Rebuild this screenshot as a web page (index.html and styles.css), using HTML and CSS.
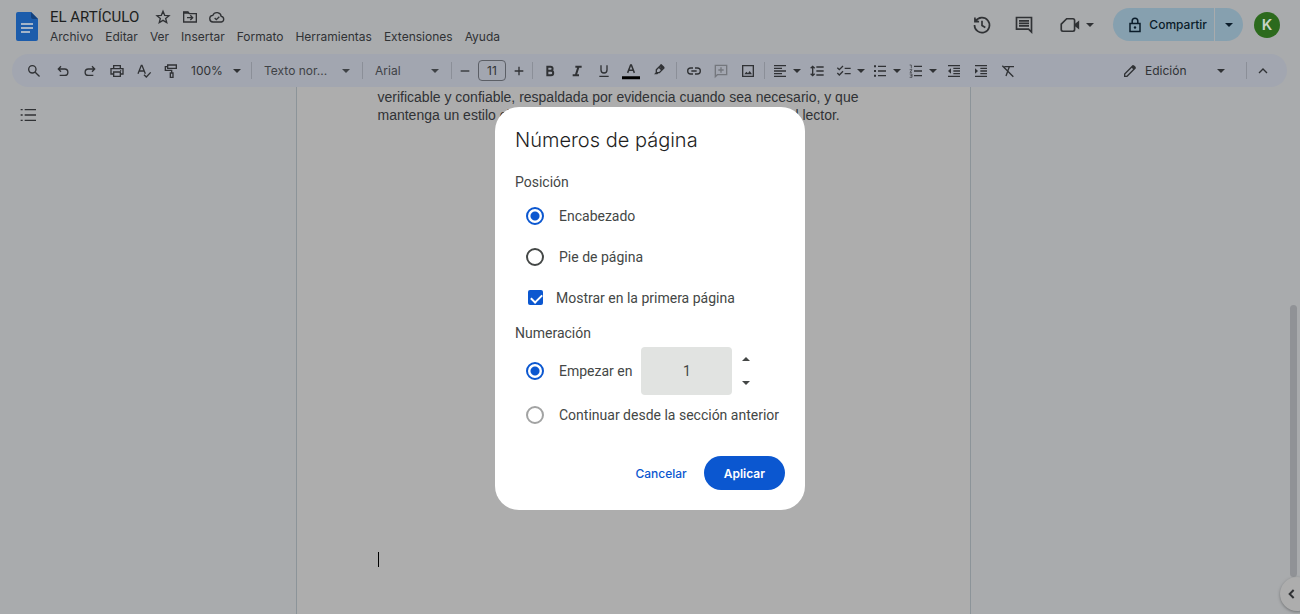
FILE: index.html
```html
<!DOCTYPE html>
<html lang="es">
<head>
<meta charset="utf-8">
<title>EL ARTÍCULO</title>
<link rel="stylesheet" href="styles.css">
</head>
<body>
<div class="app">
  <header class="header">
    <svg class="logo" viewBox="0 0 22 29"><path d="M2 0h13l7 7v20a2 2 0 0 1-2 2H2a2 2 0 0 1-2-2V2a2 2 0 0 1 2-2z" fill="#1c5cab"/><path d="M15 0l7 7h-5a2 2 0 0 1-2-2z" fill="#12407c"/><path d="M5 12h12M5 16h12M5 20h9" stroke="#a4b4c8" stroke-width="2"/></svg>
    <div class="heading">
      <div class="title-row">
        <h1 class="doc-title">EL ARTÍCULO</h1>
        <button class="mini" aria-label="Destacar"><svg viewBox="0 0 24 24"><path d="M12 3.500l2.500 6 6.500.5-5 4.200 1.600 6.300L12 17.100l-5.600 3.400L8 14.200 3 10l6.500-.5z" class="line"/></svg></button>
        <button class="mini" aria-label="Mover"><svg viewBox="0 0 24 24"><path d="M2.500 19.500v-15h6.500l2 2.500h10.500v12.500zM7.500 13h8M12.500 9.500l3.500 3.500-3.500 3.500" class="line"/><path d="M2 4h7l2 3H2z"/></svg></button>
        <button class="mini" aria-label="Estado"><svg viewBox="0 0 24 24"><path d="M6.500 19.500a5 5 0 0 1-.7-10A6.500 6.500 0 0 1 18.300 11a4.300 4.300 0 0 1 .2 8.500zM8.500 13.500l2.500 2.500 4.500-4.500" class="line"/></svg></button>
      </div>
      <nav class="menu">
        <button>Archivo</button><button>Editar</button><button>Ver</button><button>Insertar</button><button>Formato</button><button>Herramientas</button><button>Extensiones</button><button>Ayuda</button>
      </nav>
    </div>
    <div class="header-actions">
      <button class="big" aria-label="Historial"><svg viewBox="0 0 24 24"><path d="M4.300 7.500a9 9 0 1 1-1.300 4.500M3.500 3v5h5M12 7v5.500l4 2.500" class="line"/></svg></button>
      <button class="big" aria-label="Comentarios"><svg viewBox="0 0 24 24"><path d="M3 3h18v17.500L17.500 17H3zM6 7h12M6 10h12M6 13h12" class="line"/></svg></button>
      <button class="meet" aria-label="Reunión"><svg viewBox="0 0 24 24"><path d="M8 4.500h7.500a2 2 0 0 1 2 2v11a2 2 0 0 1-2 2H3.500a2 2 0 0 1-2-2V11z" class="line"/><path d="M18 10.500l5-4v11l-5-4z"/></svg><i class="caret"></i></button>
      <div class="share">
        <button class="share-main"><svg viewBox="0 0 16 16"><path d="M3 6.500h10v8H3zM5.200 6.500V4a2.800 2.800 0 0 1 5.600 0v2.500" fill="none" stroke="currentColor" stroke-width="1.500"/><circle cx="8" cy="10.500" r="1.200"/></svg>Compartir</button>
        <button class="share-more" aria-label="Opciones"><i class="caret"></i></button>
      </div>
      <button class="avatar">K</button>
    </div>
  </header>

  <div class="toolbar" role="toolbar">
    <button class="tool search" aria-label="Buscar"><svg viewBox="0 0 24 24"><circle cx="9.500" cy="9.500" r="5.500" class="line"/><path d="M13.800 13.800l6.500 6.500" class="line"/></svg></button>
    <button class="tool" aria-label="Deshacer"><svg viewBox="0 0 24 24"><path d="M9 5L5 9l4 4M5 9h9.500a4.800 4.800 0 0 1 0 9.600H7" class="line"/></svg></button>
    <button class="tool" aria-label="Rehacer"><svg viewBox="0 0 24 24"><path d="M15 5l4 4-4 4M19 9H9.500a4.800 4.800 0 0 0 0 9.600H17" class="line"/></svg></button>
    <button class="tool" aria-label="Imprimir"><svg viewBox="0 0 24 24"><path d="M7 8V4h10v4M7 16.500H3V8.500h18v8h-4M7 13.500h10V20H7z" class="line"/><circle cx="17.500" cy="11.500" r="1"/></svg></button>
    <button class="tool" aria-label="Ortografía"><svg viewBox="0 0 24 24"><path d="M3 16L8 3.500h1L14 16M5 12h7M12 17.500l3.500 3.500 6.500-7" class="line"/></svg></button>
    <button class="tool" aria-label="Copiar formato"><svg viewBox="0 0 24 24"><path d="M7 3h13v5H7zM7 5.500H3.500V11H13v4M11 15h4v6.500h-4z" class="line"/></svg></button>
    <label class="pick zoom"><select aria-label="Zoom"><option>100%</option></select><i class="caret"></i></label>
    <span class="rule"></span>
    <label class="pick style"><select aria-label="Estilos"><option>Texto nor...</option></select><i class="caret"></i></label>
    <span class="rule"></span>
    <label class="pick font"><select aria-label="Fuente"><option>Arial</option></select><i class="caret"></i></label>
    <span class="rule"></span>
    <button class="tool step" aria-label="Reducir"><svg viewBox="0 0 24 24"><path d="M5.500 12h13" class="line"/></svg></button>
    <input class="size" type="text" value="11" aria-label="Tamaño">
    <button class="tool step" aria-label="Aumentar"><svg viewBox="0 0 24 24"><path d="M5.500 12h13M12 5.500v13" class="line"/></svg></button>
    <span class="rule"></span>
    <div class="group">
      <button class="tool" aria-label="Negrita"><svg viewBox="0 0 24 24"><path d="M8 5.500h4.800a3 3 0 0 1 0 6.200H8zM8 11.700h5.500a3.300 3.300 0 0 1 0 6.600H8z" class="line heavy"/></svg></button>
      <button class="tool" aria-label="Cursiva"><svg viewBox="0 0 24 24"><path d="M9.500 5.500H19M5.500 18.500H15M14.300 5.500l-4.200 13" class="line heavy"/></svg></button>
      <button class="tool" aria-label="Subrayado"><svg viewBox="0 0 24 24"><path d="M7.500 3.500v7a4.500 4.500 0 0 0 9 0v-7M5 20h14" class="line"/></svg></button>
      <button class="tool ink" aria-label="Color de texto"><svg viewBox="0 0 24 24"><path d="M7.500 14.500L11.500 4h1l4 10.500M9 11h6" class="line"/><path d="M0 19h24v4H0z" fill="#000"/></svg></button>
      <button class="tool marker" aria-label="Resaltar"><svg viewBox="0 0 24 24"><path d="M8 10l6.500-6.500 4.500 4.500-6.500 6.500H8zM12 6.500l4.500 4.500" class="line"/><path d="M13.500 3l2-1.500 5 5-1.500 2L14 9zM8 13.500l3 2L9.500 17H4.500z"/></svg></button>
    </div>
    <span class="rule"></span>
    <div class="group">
      <button class="tool" aria-label="Enlace"><svg viewBox="0 0 24 24"><path d="M10.500 7.500H7a4.500 4.500 0 0 0 0 9h3.500M13.500 7.500H17a4.500 4.500 0 0 1 0 9h-3.500M8 12h8" class="line"/></svg></button>
      <button class="tool off" aria-label="Comentario"><svg viewBox="0 0 24 24"><path d="M3.500 20.500V3.500h17v14h-14zM12 6.500v8M8 10.500h8" class="line"/></svg></button>
      <button class="tool" aria-label="Imagen"><svg viewBox="0 0 24 24"><path d="M4 4h16v16H4z" class="line"/><path d="M6.500 17l3-4 2.500 2.500 2.500-3.500 3.500 5z"/></svg></button>
    </div>
    <span class="rule"></span>
    <div class="group">
      <button class="split" aria-label="Alinear"><svg viewBox="0 0 24 24"><path d="M3 4h18M3 8h12M3 12h18M3 16h12M3 20h18" class="line"/></svg><i class="caret"></i></button>
      <button class="tool spacing" aria-label="Interlineado"><svg viewBox="0 0 24 24"><path d="M11 6h11M11 12h11M11 18h11M5.500 5v14M2.500 8l3-3 3 3M2.500 16l3 3 3-3" class="line"/></svg></button>
      <button class="split checks" aria-label="Lista de control"><svg viewBox="0 0 24 24"><path d="M2 7l3 3 5.500-5.500M2 15l3 3 5.500-5.500M13 8h9M13 16h9" class="line"/></svg><i class="caret"></i></button>
      <button class="split" aria-label="Viñetas"><svg viewBox="0 0 24 24"><path d="M9 5h12M9 12h12M9 19h12" class="line"/><path d="M3 5h3M3 12h3M3 19h3" class="line heavy"/></svg><i class="caret"></i></button>
      <button class="split" aria-label="Numeración"><svg viewBox="0 0 24 24"><path d="M9 5h12M9 12h12M9 19h12" class="line"/><path d="M2.500 3H5v5M2.500 10H6l-3 4h3M2.500 16.500H6v5H2.500M3.500 19H6" class="line thin"/></svg><i class="caret"></i></button>
      <button class="tool" aria-label="Reducir sangría"><svg viewBox="0 0 24 24"><path d="M3 4h18M11 8h10M11 12h10M11 16h10M3 20h18" class="line"/><path d="M7.500 8v8l-4.500-4z"/></svg></button>
      <button class="tool" aria-label="Aumentar sangría"><svg viewBox="0 0 24 24"><path d="M3 4h18M11 8h10M11 12h10M11 16h10M3 20h18" class="line"/><path d="M3 8v8l4.500-4z"/></svg></button>
      <button class="tool" aria-label="Borrar formato"><svg viewBox="0 0 24 24"><path d="M6.500 5.500H21M14 5.500l-5 14M3.500 4l16.500 16.500" class="line"/></svg></button>
    </div>
    <div class="mode">
      <svg viewBox="0 0 24 24"><path d="M4 20v-3.500L16 4.500 19.500 8 7.500 20z" class="line"/><path d="M14 6.500L17.500 3 21 6.500 17.500 10z"/></svg>
      <label class="pick editing"><select aria-label="Modo"><option>Edición</option></select><i class="caret"></i></label>
      <span class="rule"></span>
      <button class="tool hide" aria-label="Ocultar menús"><svg viewBox="0 0 24 24"><path d="M6 15l6-6 6 6" class="line"/></svg></button>
    </div>
  </div>

  <main class="workspace">
    <aside class="outline"><button class="outline-btn" aria-label="Esquema"><svg viewBox="0 0 24 24"><path d="M7 4h17M7 12h17M7 20h17M1 4h3M1 12h3M1 20h3" class="line"/></svg></button></aside>
    <article class="sheet">
      <p>verificable y confiable, respaldada por evidencia cuando sea necesario, y que<br>mantenga un estilo claro, conciso y comprensible para el interés del lector.</p>
      <div class="cursor"></div>
    </article>
  </main>
  <div class="scroll-thumb"></div>
  <button class="side-toggle" aria-label="Mostrar panel"><svg viewBox="0 0 24 24"><path d="M14.500 6l-6 6 6 6" class="line heavy"/></svg></button>
</div>

<div class="backdrop">
  <form class="dialog" role="dialog" aria-labelledby="dlg-title">
    <h2 id="dlg-title">Números de página</h2>
    <h3>Posición</h3>
    <label class="option"><input type="radio" name="pos" checked>Encabezado</label>
    <label class="option"><input type="radio" name="pos">Pie de página</label>
    <label class="option check"><input type="checkbox" checked>Mostrar en la primera página</label>
    <h3 class="second">Numeración</h3>
    <div class="start">
      <label class="option"><input type="radio" name="num" checked>Empezar en</label>
      <input class="number" type="text" inputmode="numeric" value="1" aria-label="Empezar en">
      <div class="spin"><button type="button" aria-label="Subir"><i class="caret up"></i></button><button type="button" aria-label="Bajar"><i class="caret"></i></button></div>
    </div>
    <label class="option muted"><input type="radio" name="num">Continuar desde la sección anterior</label>
    <div class="actions"><button type="button" class="cancel">Cancelar</button><button type="button" class="apply">Aplicar</button></div>
  </form>
</div>
</body>
</html>
```
FILE: styles.css
```css
* { box-sizing: border-box; }
body {
  margin: 0;
  font-family: Inter, Roboto, sans-serif;
  font-size: 12px;
  color: #303235;
  background: #a9abad;
}
button, select, input { font: inherit; color: inherit; }
button { border: 0; padding: 0; background: none; cursor: pointer; }
h1, h2, h3, p { margin: 0; font-weight: 400; }
svg { display: block; fill: currentColor; flex: none; }
.line { fill: none; stroke: currentColor; stroke-width: 2; }
.heavy { stroke-width: 3; }
.thin { stroke-width: 1; }
.caret {
  flex: none;
  width: 8px;
  border: 4px solid transparent;
  border-top-color: currentColor;
  border-bottom: 0;
}
.caret.up { border-top: 0; border-bottom: 4px solid currentColor; }

.app { position: relative; display: flex; flex-direction: column; height: 100vh; overflow: hidden; }

.header { display: flex; align-items: flex-start; flex: none; height: 54px; padding: 0 20px 0 16px; }
.logo { width: 22px; height: 29px; margin-top: 12px; }
.heading { padding: 7px 0 0 12px; }
.title-row { display: flex; align-items: center; height: 20px; }
.doc-title { margin-right: 14px; font-family: Roboto, sans-serif; font-size: 15px; line-height: 20px; color: #1d1f20; }
.mini { width: 27px; display: flex; align-items: center; justify-content: center; }
.mini:nth-of-type(1) { width: 19px; margin-right: 4px; }
.mini svg { width: 16px; height: 16px; }
.menu { display: flex; gap: 12px; height: 20px; line-height: 20px; }
.header-actions { display: flex; align-items: center; height: 33px; margin: 8px 0 0 auto; }
.big { width: 42px; display: flex; justify-content: center; }
.big svg, .meet svg { width: 20px; height: 20px; }
.meet { display: flex; align-items: center; gap: 6px; margin: 0 19px 0 15px; }
.share { display: flex; height: 33px; color: #0b1c2a; }
.share-main { display: flex; align-items: center; gap: 6px; padding: 0 7px 0 14px; border-radius: 17px 0 0 17px; background: #86a0af; font-weight: 500; }
.share-main svg { width: 16px; height: 16px; }
.share-more { display: flex; align-items: center; justify-content: center; width: 28px; margin-left: 1px; border-radius: 0 17px 17px 0; background: #86a0af; }
.avatar { width: 26px; height: 26px; margin-left: 11px; border-radius: 50%; background: #2c6a1d; color: #c9d3c6; font-size: 15px; font-weight: 600; }

.toolbar {
  display: flex;
  align-items: center;
  flex: none;
  height: 33px;
  margin: 0 13px 0 12px;
  padding: 0 8px;
  border-radius: 17px;
  background: #a2a6b0;
}
.tool { flex: none; display: flex; justify-content: center; width: 27px; }
.tool svg, .split svg { width: 16px; height: 16px; }
.tool.ink svg { width: 18px; height: 18px; }
.search { margin-right: 2px; }
.step { width: 26px; }
.off { color: #74777d; }
.marker { width: 29px; }
.marker svg { width: 16px; height: 18px; }
.spacing { width: 25px; }
.checks { margin-left: 3px; }
.rule { flex: none; width: 1px; height: 17px; background: #8b8f98; }
.pick { position: relative; flex: none; display: flex; align-items: center; }
.pick select { width: 100%; height: 20px; padding: 0; border: 0; background: none; appearance: none; }
.pick .caret { position: absolute; right: 12px; pointer-events: none; }
.zoom { width: 67px; padding-left: 7px; }
.zoom .caret { right: 10px; }
.style { width: 110px; padding-left: 12px; color: #3f4246; }
.font { width: 88px; padding-left: 12px; color: #3f4246; }
.size { flex: none; width: 28px; height: 21px; padding: 0; border: 1px solid #5c5f66; border-radius: 4px; background: none; text-align: center; }
.group { display: flex; align-items: center; margin: 0 3px; }
.split { display: flex; align-items: center; gap: 4px; width: 36px; padding: 0 3px; }
.split svg { width: 18px; }
.mode { display: flex; align-items: center; margin-left: auto; }
.mode > svg { width: 16px; height: 16px; }
.editing { width: 108px; padding-left: 7px; }
.editing .caret { right: 21px; }
.hide { width: 32px; }

.workspace {
  flex: 1;
  min-height: 0;
  display: grid;
  grid-template-columns: minmax(0, 1fr) minmax(0, 675px) minmax(0, 1fr);
  padding-right: 34px;
}
.outline { padding: 20px; }
.outline-btn svg { width: 16px; height: 16px; }
.sheet {
  padding: 1px 0 0 81px;
  border: solid #8c9499;
  border-width: 0 1px;
  background: #adadad;
  font-family: "Liberation Sans", Arial, sans-serif;
  font-size: 14px;
  line-height: 18px;
  white-space: nowrap;
}
.cursor { width: 1px; height: 15px; margin-top: 428px; background: #000; }
.scroll-thumb { position: absolute; right: 3px; bottom: 37px; width: 7px; height: 272px; border-radius: 4px; background: #909296; }
.side-toggle { position: absolute; right: -14px; bottom: 3px; width: 34px; height: 34px; padding-left: 4px; border-radius: 50%; background: #adadad; box-shadow: 0 1px 3px #707274; }
.side-toggle svg { width: 16px; height: 16px; }

.backdrop { position: fixed; inset: 0; display: flex; align-items: center; justify-content: center; padding-top: 3px; }
.dialog { min-width: 310px; padding: 20px; border-radius: 24px; background: #fff; color: #444746; font-family: Roboto, sans-serif; font-size: 14px; }
.dialog h2 { font-family: Inter, sans-serif; font-size: 20px; font-weight: 300; line-height: 26px; color: #1f1f1f; }
.dialog h3 { margin: 19px 0 3px; font-size: 14px; line-height: 20px; }
.dialog .second { margin: 5px 0 4px; }
.option { display: flex; align-items: center; gap: 15px; height: 41px; padding-left: 11px; }
.option input { appearance: none; flex: none; width: 18px; height: 18px; margin: 0; border: 2px solid #444746; border-radius: 50%; }
.option input:checked { border-color: #0b57d0; background: radial-gradient(circle, #0b57d0 4px, #fff 5px); }
.option.check { gap: 13px; padding-left: 13px; }
.option.check input { width: 15px; height: 15px; border: 0; border-radius: 2px; background: #0b57d0; }
.option.check input::after { content: ""; display: block; width: 9px; height: 5px; margin: 4px 3px; border: solid #fff; border-width: 0 0 2px 2px; transform: rotate(-45deg); }
.option.muted { height: 39px; }
.option.muted input { border-color: #a2a3a3; }
.start { display: flex; align-items: center; height: 48px; }
.number { width: 91px; height: 48px; margin-left: 9px; padding: 0; border: 0; border-radius: 4px; background: #e1e3e1; text-align: center; }
.spin { display: flex; flex-direction: column; margin-left: 5px; }
.spin button { display: flex; align-items: center; justify-content: center; width: 17px; height: 24px; }
.actions { display: flex; justify-content: flex-end; gap: 17px; margin-top: 22px; font-family: Inter, sans-serif; font-size: 12px; font-weight: 500; }
.cancel { color: #0b57d0; }
.apply { height: 34px; padding: 0 20px; border-radius: 17px; background: #0b57d0; color: #fff; font-weight: 600; }
```
